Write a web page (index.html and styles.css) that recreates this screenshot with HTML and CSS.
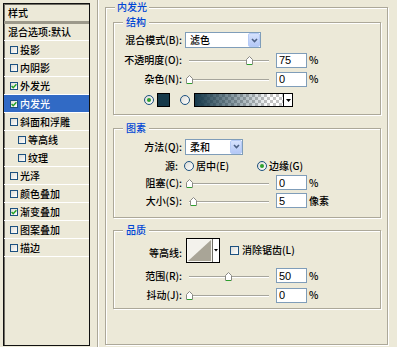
FILE: index.html
```html
<!DOCTYPE html>
<html lang="zh-CN">
<head>
<meta charset="utf-8">
<title>图层样式 - 内发光</title>
<link rel="stylesheet" href="styles.css">
</head>
<body>
<div class="dialog">
  <div class="style-list">
    <div class="list-head">样式</div>
    <div class="list-item plain">混合选项:默认</div>
    <div class="list-item"><span class="cb"></span>投影</div>
    <div class="list-item"><span class="cb"></span>内阴影</div>
    <div class="list-item"><span class="cb"><svg viewBox="0 0 6 6"><path d="M.6 3.1l1.6 1.6L5.4 1.2" fill="none" stroke="#21A121" stroke-width="1.4"/></svg></span>外发光</div>
    <div class="list-item selected"><span class="cb"><svg viewBox="0 0 6 6"><path d="M.6 3.1l1.6 1.6L5.4 1.2" fill="none" stroke="#21A121" stroke-width="1.4"/></svg></span>内发光</div>
    <div class="list-item"><span class="cb"></span>斜面和浮雕</div>
    <div class="list-item sub"><span class="cb"></span>等高线</div>
    <div class="list-item sub"><span class="cb"></span>纹理</div>
    <div class="list-item"><span class="cb"></span>光泽</div>
    <div class="list-item"><span class="cb"></span>颜色叠加</div>
    <div class="list-item"><span class="cb"><svg viewBox="0 0 6 6"><path d="M.6 3.1l1.6 1.6L5.4 1.2" fill="none" stroke="#21A121" stroke-width="1.4"/></svg></span>渐变叠加</div>
    <div class="list-item"><span class="cb"></span>图案叠加</div>
    <div class="list-item"><span class="cb"></span>描边</div>
  </div>

  <div class="panel">
    <fieldset class="group outer">
      <legend>内发光</legend>

      <fieldset class="group inner g-struct">
        <legend>结构</legend>
        <div class="row h20">
          <span class="lbl">混合模式(B):</span>
          <div class="select w-blend"><span class="sel-text">滤色</span><span class="sel-btn"><svg width="7" height="5" viewBox="0 0 7 5"><path d="M1 1l2.5 2.5L6 1" fill="none" stroke="#4D6185" stroke-width="1.6"/></svg></span></div>
        </div>
        <div class="row h20">
          <span class="lbl">不透明度(O):</span>
          <div class="slider"><svg class="thumb" style="left:60px" width="7" height="9" viewBox="0 0 7 9"><path d="M.5 8.5v-5l3-3 3 3v5z" fill="#fff" stroke="#8A8A84"/><path d="M1 8.5h5" stroke="#2DA12D"/></svg></div>
          <input class="num" type="text" value="75" readonly><span class="unit">%</span>
        </div>
        <div class="row h18">
          <span class="lbl">杂色(N):</span>
          <div class="slider"><svg class="thumb" style="left:0px" width="7" height="9" viewBox="0 0 7 9"><path d="M.5 8.5v-5l3-3 3 3v5z" fill="#fff" stroke="#8A8A84"/><path d="M1 8.5h5" stroke="#2DA12D"/></svg></div>
          <input class="num" type="text" value="0" readonly><span class="unit">%</span>
        </div>
        <div class="row h24 color-row">
          <span class="radio on first"></span>
          <span class="swatch"></span>
          <span class="radio second"></span>
          <span class="gradient"></span>
          <span class="grad-arrow"><svg width="5" height="3" viewBox="0 0 5 3"><path d="M0 0h5L2.5 3z" fill="#000"/></svg></span>
        </div>
      </fieldset>

      <fieldset class="group inner g-pattern">
        <legend>图素</legend>
        <div class="row h21">
          <span class="lbl">方法(Q):</span>
          <div class="select w-method"><span class="sel-text">柔和</span><span class="sel-btn"><svg width="7" height="5" viewBox="0 0 7 5"><path d="M1 1l2.5 2.5L6 1" fill="none" stroke="#4D6185" stroke-width="1.6"/></svg></span></div>
        </div>
        <div class="row h17">
          <span class="lbl src">源:</span>
          <span class="opt opt-center"><span class="radio"></span><span>居中(E)</span></span>
          <span class="opt"><span class="radio on"></span><span>边缘(G)</span></span>
        </div>
        <div class="row h17">
          <span class="lbl">阻塞(C):</span>
          <div class="slider"><svg class="thumb" style="left:0px" width="7" height="9" viewBox="0 0 7 9"><path d="M.5 8.5v-5l3-3 3 3v5z" fill="#fff" stroke="#8A8A84"/><path d="M1 8.5h5" stroke="#2DA12D"/></svg></div>
          <input class="num" type="text" value="0" readonly><span class="unit">%</span>
        </div>
        <div class="row h19">
          <span class="lbl">大小(S):</span>
          <div class="slider"><svg class="thumb" style="left:4px" width="7" height="9" viewBox="0 0 7 9"><path d="M.5 8.5v-5l3-3 3 3v5z" fill="#fff" stroke="#8A8A84"/><path d="M1 8.5h5" stroke="#2DA12D"/></svg></div>
          <input class="num" type="text" value="5" readonly><span class="unit">像素</span>
        </div>
      </fieldset>

      <fieldset class="group inner g-quality">
        <legend>品质</legend>
        <div class="row h28">
          <span class="lbl low">等高线:</span>
          <span class="contour"><svg width="34" height="25" viewBox="0 0 34 25"><rect x=".5" y=".5" width="33" height="24" fill="#fff" stroke="#000"/><rect x="1.5" y="1.5" width="25" height="22" fill="#F3F2EC"/><path d="M2 23L25 2v21z" fill="#A9A597"/><path d="M26.5 1v23" stroke="#6F6E66"/><path d="M28 11h4l-2 2.5z" fill="#000"/></svg></span>
          <span class="cb big"></span><span class="cb-text">消除锯齿(L)</span>
        </div>
        <div class="row h23">
          <span class="lbl">范围(R):</span>
          <div class="slider"><svg class="thumb" style="left:39px" width="7" height="9" viewBox="0 0 7 9"><path d="M.5 8.5v-5l3-3 3 3v5z" fill="#fff" stroke="#8A8A84"/><path d="M1 8.5h5" stroke="#2DA12D"/></svg></div>
          <input class="num" type="text" value="50" readonly><span class="unit">%</span>
        </div>
        <div class="row h16">
          <span class="lbl">抖动(J):</span>
          <div class="slider"><svg class="thumb" style="left:0px" width="7" height="9" viewBox="0 0 7 9"><path d="M.5 8.5v-5l3-3 3 3v5z" fill="#fff" stroke="#8A8A84"/><path d="M1 8.5h5" stroke="#2DA12D"/></svg></div>
          <input class="num" type="text" value="0" readonly><span class="unit">%</span>
        </div>
      </fieldset>
    </fieldset>
  </div>
</div>
</body>
</html>
```

FILE: styles.css
```css
* { box-sizing: border-box; }

body {
  margin: 0;
  width: 397px;
  height: 347px;
  overflow: hidden;
  background: #ECE9D8;
  font-family: "Noto Sans CJK SC", "Noto Sans", sans-serif;
  font-size: 10px;
  font-weight: 500;
  line-height: 12px;
  color: #000;
}

.dialog {
  display: flex;
  height: 347px;
}

/* ---------- left style list ---------- */
.style-list {
  margin: 3px 0 0 3px;
  width: 87px;
  height: 343px;
  border: 1px solid #111;
  box-shadow: inset 1px 1px #6f6d64;
  display: flex;
  flex-direction: column;
  flex: none;
}

.list-head {
  height: 20px;
  padding-left: 4px;
  display: flex;
  align-items: center;
  border-bottom: 3px solid #9C998B;
}

.list-item {
  height: 18px;
  border-bottom: 1px solid #fff;
  display: flex;
  align-items: center;
  gap: 2px;
  padding-left: 6px;
  white-space: nowrap;
}

.list-item.plain { height: 17px; padding-left: 4px; }
.list-item.sub { padding-left: 14px; }
.list-item.selected { background: #316AC5; color: #fff; }

.cb {
  width: 8px;
  height: 8px;
  border: 1px solid #1C5180;
  background: linear-gradient(135deg, #DCDBD5, #fff);
  display: flex;
  align-items: center;
  justify-content: center;
  flex: none;
}
.cb svg { width: 6px; height: 6px; display: block; }
.cb.big { width: 9px; height: 9px; margin-left: 10px; }
.cb-text { margin-left: 3px; white-space: nowrap; }

/* ---------- right panel ---------- */
.panel {
  margin-left: 7px;
  flex: 1;
  border-left: 1px solid #ACA899;
  box-shadow: inset 1px 0 #fff;
  padding-left: 7px;
}

.group {
  margin: 0;
  min-width: 0;
  border: 1px solid #ACA899;
  box-shadow: inset 1px 1px #fff, 1px 1px #fff;
}

.group > legend {
  color: #0046D5;
  background: #ECE9D8;
  line-height: 12px;
}

.outer {
  margin-top: 1px;
  width: 283px;
  height: 344px;
  padding: 3px 6px 0 7px;
}
.outer > legend { margin-left: 2px; padding: 0 2px; }

.inner > legend { margin-left: 9px; padding: 0 3px; }

.g-struct { padding: 2px 0 2px 0; }
.g-pattern { margin-top: 7px; padding: 2px 0 7px 0; }
.g-quality { margin-top: 6px; padding: 0 0 5px 0; }

.row { display: flex; align-items: center; white-space: nowrap; }
.h16 { height: 16px; }
.h17 { height: 17px; }
.h18 { height: 18px; }
.h19 { height: 19px; }
.h20 { height: 20px; }
.h21 { height: 21px; }
.h23 { height: 23px; }
.h24 { height: 24px; }
.h28 { height: 28px; }

.lbl {
  width: 68px;
  flex: none;
  text-align: right;
  white-space: nowrap;
}
.lbl.src { padding-right: 4px; }
.lbl.low { padding-top: 6px; }

/* select */
.select {
  margin-left: 3px;
  height: 16px;
  border: 1px solid #7F9DB9;
  background: #fff;
  display: flex;
  align-items: center;
  justify-content: space-between;
  padding-left: 4px;
}
.w-blend { width: 76px; }
.w-method { width: 58px; }

.sel-btn {
  width: 12px;
  height: 14px;
  border: 1px solid #B6CBF6;
  border-radius: 2px;
  background: linear-gradient(#D6E2FD, #B4C8F6);
  display: flex;
  align-items: center;
  justify-content: center;
}
.sel-btn svg { display: block; }

/* slider */
.slider {
  position: relative;
  width: 86px;
  height: 12px;
  margin-left: 4px;
  flex: none;
}
.slider::before {
  content: "";
  position: absolute;
  left: 3px;
  right: 3px;
  top: 6px;
  height: 1px;
  background: #A6A59C;
  box-shadow: 0 1px #fff;
}
.thumb {
  position: absolute;
  top: 2px;
  display: block;
}

/* numeric field */
.num {
  margin: 0 0 0 4px;
  width: 31px;
  height: 15px;
  border: 1px solid #7F9DB9;
  background: #fff;
  padding: 0 2px;
  font: 11px/13px "Liberation Sans", Arial, sans-serif;
  color: #000;
  outline: none;
}
.unit { margin-left: 2px; }

/* radio */
.radio {
  width: 10px;
  height: 10px;
  border-radius: 50%;
  border: 1px solid #1C5180;
  background: linear-gradient(135deg, #DCDBD5, #fff);
  display: flex;
  align-items: center;
  justify-content: center;
  flex: none;
}
.radio.on::after {
  content: "";
  width: 4px;
  height: 4px;
  border-radius: 50%;
  background: #2FA12F;
}

.opt { display: flex; align-items: center; gap: 2px; }
.opt-center { width: 73px; margin-left: 2px; }

/* colour row */
.radio.first { margin-left: 30px; }
.swatch {
  margin-left: 3px;
  width: 13px;
  height: 14px;
  border: 1px solid #000;
  background: #173A4A;
}
.radio.second { margin-left: 10px; }
.gradient {
  margin-left: 4px;
  width: 90px;
  height: 14px;
  border: 1px solid #000;
  background:
    linear-gradient(to right, #16394A 0%, rgba(22, 57, 74, 0.55) 40%, rgba(22, 57, 74, 0) 85%),
    repeating-conic-gradient(#C4C4C4 0 25%, #fff 0 50%) 0 0 / 6px 6px;
}
.grad-arrow {
  margin-left: -1px;
  width: 10px;
  height: 14px;
  border: 1px solid #000;
  background: #fff;
  display: flex;
  align-items: center;
  justify-content: center;
}
.grad-arrow svg { display: block; }

/* contour picker */
.contour { margin-left: 4px; width: 34px; height: 25px; }
.contour svg { display: block; }
```
